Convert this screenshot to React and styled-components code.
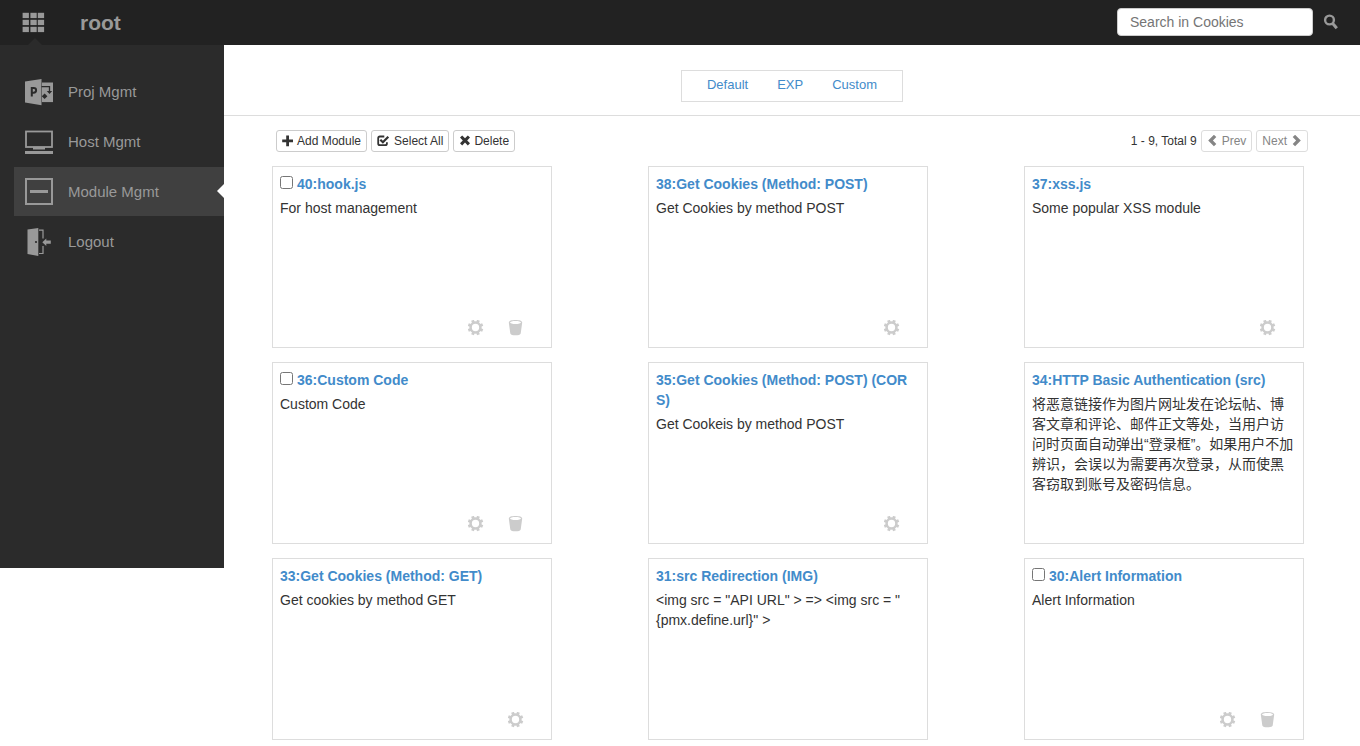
import React from "react";
import styled, { createGlobalStyle } from "styled-components";

const GlobalStyle = createGlobalStyle`
  *, *::before, *::after { box-sizing: border-box; }
  body {
    margin: 0;
    background: #fff;
    color: #333;
    font: 14px/20px "Liberation Sans", Arial, "Noto Sans CJK SC", sans-serif;
  }
  button, input { font-family: inherit; }
`;

const Header = styled.header`
  display: flex;
  align-items: center;
  height: 45px;
  padding: 0 22px;
  background: #222;
  color: #999;
`;

const AppsButton = styled.button`
  position: relative;
  display: flex;
  align-items: center;
  width: 24px;
  height: 45px;
  padding: 0;
  border: 0;
  background: none;
  color: #999;
  cursor: pointer;

  &::after {
    content: "";
    position: absolute;
    bottom: 0;
    left: 6px;
    border: 7px solid transparent;
    border-top: 0;
    border-bottom-color: #2b2b2b;
  }
`;

const Brand = styled.a`
  margin-left: 34px;
  color: #999;
  font-size: 21px;
  font-weight: bold;
  text-decoration: none;
`;

const SearchForm = styled.form`
  display: flex;
  align-items: center;
  gap: 10px;
  margin-left: auto;
  padding-bottom: 2px;
`;

const SearchInput = styled.input`
  width: 196px;
  height: 28px;
  padding: 0 12px;
  border: 1px solid #ccc;
  border-radius: 4px;
  background: #fff;
  color: #555;
  font-size: 14px;

  &::placeholder { color: #757575; }
`;

const SearchButton = styled.button`
  display: flex;
  padding: 0;
  border: 0;
  background: none;
  color: #999;
  cursor: pointer;
`;

const Body = styled.div`
  display: flex;
  align-items: flex-start;
`;

const Sidebar = styled.nav`
  display: flex;
  flex: 0 0 224px;
  flex-direction: column;
  gap: 1px;
  min-height: 523px;
  padding: 22px 0 22px 14px;
  background: #2b2b2b;
`;

const SidebarLink = styled.a`
  position: relative;
  display: flex;
  align-items: center;
  gap: 15px;
  height: 49px;
  padding-left: 11px;
  background: ${(p) => (p.$active ? "#404040" : "transparent")};
  color: #999;
  font-size: 15px;
  text-decoration: none;

  &::after {
    content: "";
    display: ${(p) => (p.$active ? "block" : "none")};
    position: absolute;
    top: 17px;
    right: 0;
    border: 7px solid transparent;
    border-left: 0;
    border-right-color: #fff;
  }
`;

const Main = styled.main`
  flex: 1;
  min-width: 0;
`;

const TabBar = styled.div`
  display: flex;
  justify-content: center;
  padding: 25px 0 13px;
  border-bottom: 1px solid #ddd;
`;

const Tabs = styled.nav`
  display: flex;
  gap: 29px;
  height: 32px;
  padding: 4px 25px;
  border: 1px solid #ddd;
`;

const Tab = styled.a`
  color: #428bca;
  font-size: 13px;
  text-decoration: none;
`;

const Toolbar = styled.div`
  display: flex;
  align-items: center;
  justify-content: space-between;
  padding: 14px 52px;
  font-size: 12px;
`;

const ButtonGroup = styled.div`
  display: flex;
  align-items: center;
  gap: 4px;
`;

const SmallButton = styled.button`
  display: flex;
  align-items: center;
  gap: 3px;
  height: 22px;
  padding: 0 5px;
  border: 1px solid #ccc;
  border-radius: 3px;
  background: #fff;
  color: #333;
  font-size: 12px;
  line-height: 18px;
  white-space: nowrap;
  cursor: pointer;

  &:disabled {
    border-color: #ddd;
    color: #858585;
    cursor: not-allowed;
  }
`;

const CardGrid = styled.div`
  display: grid;
  grid-template-columns: repeat(3, 280px);
  justify-content: space-between;
  row-gap: 14px;
  padding: 0 56px 0 48px;
`;

const Card = styled.article`
  display: flex;
  flex-direction: column;
  min-height: 182px;
  padding: 7px;
  border: 1px solid #ddd;
`;

const CardTitle = styled.h2`
  margin: 0 0 4px;
  font-size: 14px;
  line-height: 20px;
  word-break: break-all;
`;

const CardCheckbox = styled.input`
  width: 13px;
  height: 13px;
  margin: 0 4px 0 0;
  vertical-align: 0;
`;

const CardLink = styled.a`
  color: #428bca;
  text-decoration: none;
`;

const CardText = styled.p`
  margin: 0;
`;

const CardActions = styled.div`
  display: flex;
  justify-content: flex-end;
  gap: 24px;
  margin-top: auto;
  padding: 0 20px 4px 0;
`;

const ActionButton = styled.button`
  display: flex;
  padding: 0;
  border: 0;
  background: none;
  color: #ccc;
  cursor: pointer;
`;

const AppsIcon = () => (
  <svg width="24" height="22" viewBox="0 0 24 22" fill="currentColor" aria-hidden="true">
    {[1, 8, 15].map((y) => [0.6, 8.4, 15.800].map((x) => (
      <rect key={`${x}-${y}`} x={x} y={y - 0.2} width="6.300" height="5.300" />
    )))}
  </svg>
);

const SearchIcon = () => (
  <svg width="15" height="16" viewBox="0 0 15 16" fill="none" stroke="currentColor" aria-hidden="true">
    <circle cx="6.500" cy="6" r="4.400" strokeWidth="2.400" />
    <path d="M9.500 9.300l4.300 5" strokeWidth="3" />
  </svg>
);

const ProjectIcon = () => (
  <svg width="28" height="28" viewBox="0 0 28 28" aria-hidden="true">
    <path fill="#999" d="M0 3.500L16.500 1v26.200L0 24.500z" />
    <path fill="#999" d="M17 4.500h11v19.600H17z" />
    <path fill="none" stroke="#2b2b2b" strokeWidth="2" d="M6.800 18.500V10h1.900c1.600 0 2.400.8 2.400 2.300s-.9 2.400-2.500 2.400H7" />
    <path fill="none" stroke="#2b2b2b" strokeWidth="1.300" d="M16.500 8.700h8v4.800" />
    <path fill="#2b2b2b" d="M21.800 12.900H27.200L24.500 16zM16.800 18.200l2.800-2.800 2.800 2.800-2.800 2.800z" />
  </svg>
);

const HostIcon = () => (
  <svg width="28" height="28" viewBox="0 0 28 28" aria-hidden="true">
    <rect x="1" y="3.500" width="26" height="15.500" fill="none" stroke="#999" strokeWidth="1.800" />
    <path fill="#999" d="M8 19h12v2.500H8zM0 23h28v3H0z" />
  </svg>
);

const ModuleIcon = () => (
  <svg width="28" height="28" viewBox="0 1 28 28" fill="none" stroke="#999" aria-hidden="true">
    <rect x="1" y="2" width="26" height="25" strokeWidth="2" />
    <path d="M5 14.500h18" strokeWidth="3" />
  </svg>
);

const LogoutIcon = () => (
  <svg width="28" height="28" viewBox="0 1 28 28" aria-hidden="true">
    <path fill="#999" d="M2.500 2.500L13.300 1v28L2.500 27z" />
    <circle cx="11" cy="15" r="1.100" fill="#2b2b2b" />
    <path fill="none" stroke="#999" strokeWidth="1.200" d="M14 3.200h4v8.300M18 19v7.500H14" />
    <path fill="#999" d="M17.300 15.200l4-3.800v2.200h4.500v3.200h-4.500V19z" />
  </svg>
);

const Glyph = ({ width = 12, children }) => (
  <svg width={width} height="12" viewBox={`0 0 ${width} 12`} fill="currentColor" aria-hidden="true">{children}</svg>
);
const PlusIcon = () => <Glyph><path d="M4.200 .4h2.800v4h4v2.800h-4v4H4.200v-4h-4V4.400h4z" /></Glyph>;
const CheckIcon = () => (
  <Glyph width={14}>
    <path fill="none" stroke="currentColor" strokeWidth="1.800" d="M7.300 1.500H2.900Q1.200 1.500 1.200 3.200v5.300q0 1.700 1.700 1.700h5.300q1.700 0 1.700-1.700V7.200" />
    <path fill="none" stroke="currentColor" strokeWidth="2.200" d="M3.300 4.700l2.600 2.600 5.400-5.600" />
  </Glyph>
);
const RemoveIcon = () => <Glyph><path d="M3.200 .4L6 3.200 8.800 .4 11 2.600 8.200 5.400 11 8.200 8.800 10.400 6 7.600 3.200 10.400 1 8.200 3.800 5.400 1 2.600z" /></Glyph>;
const PrevIcon = () => <Glyph><path d="M6.900 -.2L9.300 2.100 5.900 5.500 9.300 8.900 6.900 11.200 1.200 5.500z" /></Glyph>;
const NextIcon = () => <Glyph><path d="M5.100 -.2L2.700 2.100 6.100 5.500 2.700 8.900 5.100 11.200 10.800 5.500z" /></Glyph>;

const GearIcon = () => (
  <svg width="16" height="16" viewBox="0 0 16 16" fill="none" stroke="currentColor" aria-hidden="true">
    <circle cx="7.500" cy="7.500" r="4.900" strokeWidth="2.500" />
    {[22.5, 67.5, 112.5, 157.5, 202.5, 247.5, 292.5, 337.5].map((a) => (
      <path key={a} d="M7.500 2.500V-.3" strokeWidth="2.900" transform={`rotate(${a} 7.500 7.500)`} />
    ))}
  </svg>
);

const TrashIcon = () => (
  <svg width="16" height="16" viewBox="0 0 16 16" fill="currentColor" aria-hidden="true">
    <path fillRule="evenodd" d="M.8 2.500C.8 .8 3.700 0 7.500 0s6.700.8 6.700 2.500L12.700 13.400c-.3 1.200-2.400 1.900-5.200 1.900s-4.900-.7-5.200-1.900zM7.500 1.100c-3.100 0-5.500.6-5.500 1.500s2.400 1.500 5.500 1.500 5.500-.6 5.500-1.500-2.400-1.500-5.500-1.500z" />
  </svg>
);

const navItems = [
  { label: "Proj Mgmt", Icon: ProjectIcon },
  { label: "Host Mgmt", Icon: HostIcon },
  { label: "Module Mgmt", Icon: ModuleIcon, active: true },
  { label: "Logout", Icon: LogoutIcon },
];

const modules = [
  { id: 40, name: "hook.js", text: "For host management", selectable: true, edit: true },
  { id: 38, name: "Get Cookies (Method: POST)", text: "Get Cookies by method POST", edit: true },
  { id: 37, name: "xss.js", text: "Some popular XSS module", edit: true },
  { id: 36, name: "Custom Code", text: "Custom Code", selectable: true, edit: true },
  { id: 35, name: "Get Cookies (Method: POST) (CORS)", text: "Get Cookeis by method POST", edit: true },
  { id: 34, name: "HTTP Basic Authentication (src)", text: "将恶意链接作为图片网址发在论坛帖、博客文章和评论、邮件正文等处，当用户访问时页面自动弹出“登录框”。如果用户不加辨识，会误以为需要再次登录，从而使黑客窃取到账号及密码信息。" },
  { id: 33, name: "Get Cookies (Method: GET)", text: "Get cookies by method GET", edit: true },
  { id: 31, name: "src Redirection (IMG)", text: '<img src = "API URL" > => <img src = "{pmx.define.url}" >' },
  { id: 30, name: "Alert Information", text: "Alert Information", selectable: true, edit: true },
];

const ModuleCard = ({ id, name, text, selectable, edit }) => (
  <Card>
    <CardTitle>
      {selectable && <CardCheckbox type="checkbox" aria-label={`Select ${name}`} />}
      <CardLink href={`#module-${id}`}>{`${id}:${name}`}</CardLink>
    </CardTitle>
    <CardText>{text}</CardText>
    {edit && (
      <CardActions>
        <ActionButton type="button" aria-label={`Edit ${name}`}><GearIcon /></ActionButton>
        {selectable && <ActionButton type="button" aria-label={`Delete ${name}`}><TrashIcon /></ActionButton>}
      </CardActions>
    )}
  </Card>
);

export default function App() {
  return (
    <>
      <GlobalStyle />
      <Header>
        <AppsButton type="button" aria-label="Menu"><AppsIcon /></AppsButton>
        <Brand href="#root">root</Brand>
        <SearchForm role="search" onSubmit={(e) => e.preventDefault()}>
          <SearchInput type="text" placeholder="Search in Cookies" aria-label="Search in Cookies" />
          <SearchButton type="submit" aria-label="Search"><SearchIcon /></SearchButton>
        </SearchForm>
      </Header>
      <Body>
        <Sidebar>
          {navItems.map(({ label, Icon, active }) => (
            <SidebarLink key={label} href="#nav" $active={active}>
              <Icon />
              {label}
            </SidebarLink>
          ))}
        </Sidebar>
        <Main>
          <TabBar>
            <Tabs>
              <Tab href="#default">Default</Tab>
              <Tab href="#exp">EXP</Tab>
              <Tab href="#custom">Custom</Tab>
            </Tabs>
          </TabBar>
          <Toolbar>
            <ButtonGroup>
              <SmallButton type="button"><PlusIcon />Add Module</SmallButton>
              <SmallButton type="button"><CheckIcon />Select All</SmallButton>
              <SmallButton type="button"><RemoveIcon />Delete</SmallButton>
            </ButtonGroup>
            <ButtonGroup>
              <span>1 - 9, Total 9</span>
              <SmallButton type="button" disabled><PrevIcon />Prev</SmallButton>
              <SmallButton type="button" disabled>Next<NextIcon /></SmallButton>
            </ButtonGroup>
          </Toolbar>
          <CardGrid>
            {modules.map((m) => <ModuleCard key={m.id} {...m} />)}
          </CardGrid>
        </Main>
      </Body>
    </>
  );
}
